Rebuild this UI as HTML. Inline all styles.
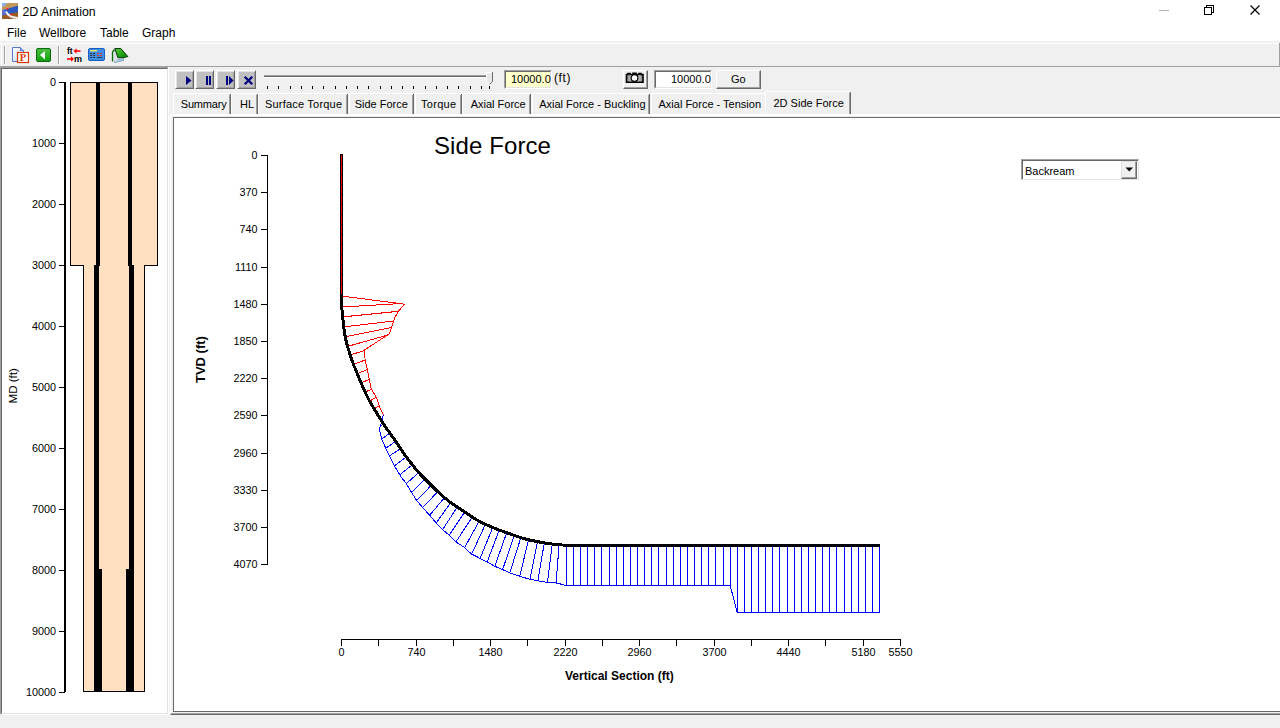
<!DOCTYPE html>
<html><head><meta charset="utf-8">
<style>
*{margin:0;padding:0;box-sizing:border-box}
html,body{width:1280px;height:728px;overflow:hidden;background:#f0f0f0;font-family:"Liberation Sans",sans-serif;color:#000}
.a{position:absolute}
.t{position:absolute;white-space:nowrap;line-height:1}
#title{left:0;top:0;width:1280px;height:41px;background:#fff}
#band{left:0;top:41px;width:1280px;height:2px;background:#f0f0f0}
#band2{left:0;top:43px;width:1280px;height:1px;background:#fff}
.btn{position:absolute;background:#c0c0c0;border-top:1px solid #fff;border-left:1px solid #fff;border-right:1px solid #696969;border-bottom:1px solid #696969;box-shadow:inset 1px 1px 0 #e3e3e3,inset -1px -1px 0 #a0a0a0}
.btn2{position:absolute;background:#f0f0f0;border-top:1px solid #fff;border-left:1px solid #fff;border-right:1px solid #696969;border-bottom:1px solid #696969;box-shadow:inset -1px -1px 0 #a0a0a0}
.edit{position:absolute;border-top:1px solid #a0a0a0;border-left:1px solid #a0a0a0;border-right:1px solid #fff;border-bottom:1px solid #fff}
.edit>div{position:absolute;left:0;top:0;right:0;bottom:0;border-top:1px solid #696969;border-left:1px solid #696969;border-right:1px solid #e3e3e3;border-bottom:1px solid #e3e3e3}
.tab{position:absolute;top:93px;height:22px;font-size:12px}
.sep{position:absolute;width:2px;background:#696969;border-right:1px solid #a0a0a0}
</style></head><body>
<div id="title" class="a"></div>
<div id="band" class="a"></div>
<div id="band2" class="a"></div>
<div class="a" style="left:1px;top:44px;width:1px;height:22px;background:#fff"></div>

<!-- app icon -->
<svg class="a" style="left:2px;top:3px" width="16" height="16" viewBox="0 0 16 16">
<rect width="16" height="16" fill="#2a58c0"/>
<polygon points="0,0 16,0 16,2.5 0,7.5" fill="#c49658"/>
<polygon points="0,0 6,0 0,4.5" fill="#8ab8ec"/>
<polygon points="0,7 3,6.2 4,14 0,14" fill="#5a6cd0"/>
<polygon points="0,16 0,12.5 16,9 16,16" fill="#9a5a24"/>
<path d="M4,8.5 Q6.5,14.5 16,15" stroke="#eeeeee" stroke-width="2" fill="none"/>
<circle cx="5.5" cy="6" r="1" fill="#f02020"/><circle cx="9.5" cy="11.5" r="1" fill="#f02020"/>
</svg>
<div class="t" style="left:22.5px;top:6px;font-size:12.3px">2D Animation</div>

<!-- window controls -->
<div class="a" style="left:1159px;top:10px;width:10px;height:1px;background:#b4b4b4"></div>
<svg class="a" style="left:1204px;top:5px" width="10" height="10" viewBox="0 0 10 10" shape-rendering="crispEdges"><path d="M2.5,2 V0.5 H9.5 V7.5 H8" fill="none" stroke="#000"/><rect x="0.5" y="2.5" width="7" height="7" fill="none" stroke="#000"/></svg>
<svg class="a" style="left:1250px;top:5px" width="10" height="10" viewBox="0 0 10 10"><path d="M0.5,0.5 L9.5,9.5 M9.5,0.5 L0.5,9.5" stroke="#000" stroke-width="1.2"/></svg>
<!-- menu -->
<div class="t" style="left:7px;top:27px;font-size:12px">File</div>
<div class="t" style="left:39px;top:27px;font-size:12px">Wellbore</div>
<div class="t" style="left:100px;top:27px;font-size:12px">Table</div>
<div class="t" style="left:142px;top:27px;font-size:12px">Graph</div>

<!-- toolbar separators -->
<div class="a" style="left:4px;top:46px;width:1px;height:18px;background:#a0a0a0"></div>
<div class="a" style="left:5px;top:46px;width:1px;height:18px;background:#fff"></div>
<div class="a" style="left:58px;top:46px;width:1px;height:18px;background:#a0a0a0"></div>
<div class="a" style="left:59px;top:46px;width:1px;height:18px;background:#fff"></div>

<!-- toolbar icons -->
<svg class="a" style="left:12px;top:46px" width="18" height="18" viewBox="0 0 18 18">
<defs><linearGradient id="pg" x1="0" y1="0" x2="1" y2="1"><stop offset="0" stop-color="#fff"/><stop offset="1" stop-color="#bcd6f5"/></linearGradient></defs>
<path d="M0.5,1.5 H8.5 L11.5,4.5 V15.5 H0.5 Z" fill="url(#pg)" stroke="#5a78c8"/>
<path d="M8.5,1.5 V4.5 H11.5" fill="#9ec0ee" stroke="#5a78c8"/>
<rect x="5.5" y="6.5" width="11" height="10" fill="#fff" stroke="#d83a10" stroke-width="1.2"/>
<text x="11" y="15" font-family="Liberation Serif" font-weight="bold" font-size="10.5" fill="#d83a10" text-anchor="middle">P</text>
</svg>
<svg class="a" style="left:36px;top:48px" width="15" height="14" viewBox="0 0 15 14">
<defs><linearGradient id="gg" x1="0" y1="0" x2="0" y2="1"><stop offset="0" stop-color="#4cc040"/><stop offset="1" stop-color="#10a010"/></linearGradient></defs>
<rect x="0.5" y="0.5" width="14" height="13" rx="1.5" fill="url(#gg)" stroke="#0a6a10"/>
<polygon points="4,7 9,3 9,11.5" fill="#fff"/>
</svg>
<svg class="a" style="left:66px;top:47px" width="17" height="16" viewBox="0 0 17 16">
<text x="1" y="7" font-family="Liberation Sans" font-weight="bold" font-size="8.5" fill="#000">ft</text>
<path d="M9,4 H14.5" stroke="#f00" stroke-width="1.6"/><polygon points="7.5,4 10.5,1.2 10.5,6.8" fill="#f00"/>
<path d="M1,12 H6" stroke="#f00" stroke-width="1.6"/><polygon points="8,12 5,9.2 5,14.8" fill="#f00"/>
<text x="8" y="15" font-family="Liberation Sans" font-weight="bold" font-size="9" fill="#000">m</text>
</svg>
<svg class="a" style="left:88px;top:48px" width="18" height="14" viewBox="0 0 18 14">
<rect x="0.5" y="0.5" width="16" height="12" rx="1.5" fill="#3c8ee6" stroke="#1a5cc0"/>
<rect x="2" y="2" width="7" height="1.5" fill="#e8e070"/>
<g fill="#333"><rect x="2" y="5" width="2" height="1"/><rect x="5" y="5" width="2" height="1"/><rect x="2" y="7" width="2" height="1"/><rect x="5" y="7" width="2" height="1"/><rect x="2" y="9" width="2" height="1"/><rect x="5" y="9" width="2" height="1"/><rect x="9" y="9" width="5" height="1"/></g>
<g fill="#d33"><rect x="9" y="5" width="2" height="1"/><rect x="12" y="5" width="2" height="1"/><rect x="9" y="7" width="2" height="1"/><rect x="12" y="7" width="2" height="1"/></g>
</svg>
<svg class="a" style="left:111px;top:47px" width="18" height="17" viewBox="0 0 18 17">
<defs><linearGradient id="bk" x1="0" y1="0" x2="1" y2="1"><stop offset="0" stop-color="#50d030"/><stop offset="1" stop-color="#008000"/></linearGradient></defs>
<polygon points="3,13.5 12.5,11.5 12.5,13.5 3.5,15.5" fill="#b0d8f8" stroke="#7090b8" stroke-width="0.8"/>
<polygon points="2.5,5 3.8,2.5 7,10.8 6,14 2.5,14.5" fill="#dcdce6"/>
<path d="M1.5,14.5 V5 L3.5,2.5" fill="none" stroke="#0a6a0a" stroke-width="1.3"/>
<polygon points="3.8,1.5 9.8,1.5 16.8,9.5 13.5,10.5 7,10.8" fill="url(#bk)" stroke="#053805" stroke-width="1"/>
</svg>

<div class="a" style="left:1279px;top:43px;width:1px;height:23px;background:#a0a0a0"></div>
<!-- toolbar bottom line -->
<div class="a" style="left:0;top:66px;width:1280px;height:1px;background:#a0a0a0"></div>

<!-- left panel -->
<div class="a" style="left:0;top:67px;width:169px;height:648px;background:#fff;border-top:1px solid #a0a0a0;border-left:1px solid #a0a0a0;border-right:1px solid #fff;border-bottom:1px solid #fff"></div><div class="a" style="left:1px;top:68px;width:167px;height:646px;border-top:1px solid #696969;border-left:1px solid #696969;border-right:1px solid #e3e3e3;border-bottom:1px solid #e3e3e3"></div>

<!-- right panel highlight line -->
<div class="a" style="left:168px;top:67px;width:1px;height:648px;background:#fff"></div>

<!-- animation buttons -->
<div class="btn" style="left:175px;top:70px;width:19px;height:19px"></div>
<div class="btn" style="left:195px;top:70px;width:19px;height:19px"></div>
<div class="btn" style="left:216px;top:70px;width:19px;height:19px"></div>
<div class="btn" style="left:237px;top:70px;width:19px;height:19px"></div>
<svg class="a" style="left:175px;top:70px" width="82" height="19" viewBox="0 0 82 19">
<polygon points="11,6 16.5,10.5 11,15" fill="#000080"/>
<rect x="31" y="6" width="2" height="9" fill="#000080"/><rect x="34" y="6" width="2" height="9" fill="#000080"/>
<rect x="51" y="6" width="2" height="9" fill="#000080"/><polygon points="54,6 58.5,10.5 54,15" fill="#000080"/>
<path d="M70.5,7.5 L76.5,13.5 M76.5,7.5 L70.5,13.5" stroke="#000080" stroke-width="2.2" stroke-linecap="square"/>
</svg>

<!-- slider -->
<div class="a" style="left:264px;top:75px;width:222px;height:1px;background:#a0a0a0"></div>
<div class="a" style="left:264px;top:76px;width:222px;height:1px;background:#696969"></div>
<div class="a" style="left:264px;top:77px;width:222px;height:1px;background:#fff"></div>
<svg class="a" style="left:264px;top:70px" width="232" height="22" viewBox="0 0 232 22" id="ticks"><rect x="3" y="16" width="1" height="3" fill="#000"/><rect x="14" y="16" width="1" height="3" fill="#000"/><rect x="26" y="16" width="1" height="3" fill="#000"/><rect x="37" y="16" width="1" height="3" fill="#000"/><rect x="48" y="16" width="1" height="3" fill="#000"/><rect x="59" y="16" width="1" height="3" fill="#000"/><rect x="71" y="16" width="1" height="3" fill="#000"/><rect x="82" y="16" width="1" height="3" fill="#000"/><rect x="93" y="16" width="1" height="3" fill="#000"/><rect x="104" y="16" width="1" height="3" fill="#000"/><rect x="116" y="16" width="1" height="3" fill="#000"/><rect x="127" y="16" width="1" height="3" fill="#000"/><rect x="138" y="16" width="1" height="3" fill="#000"/><rect x="149" y="16" width="1" height="3" fill="#000"/><rect x="161" y="16" width="1" height="3" fill="#000"/><rect x="172" y="16" width="1" height="3" fill="#000"/><rect x="183" y="16" width="1" height="3" fill="#000"/><rect x="194" y="16" width="1" height="3" fill="#000"/><rect x="206" y="16" width="1" height="3" fill="#000"/><rect x="217" y="16" width="1" height="3" fill="#000"/><rect x="225" y="16" width="1" height="3" fill="#000"/></svg>
<svg class="a" style="left:485px;top:71px" width="10" height="15" viewBox="0 0 10 15">
<path d="M1.5,1.5 H7.5 V10.5 L4.5,13.5 L1.5,10.5 Z" fill="#e8e8e8" stroke="#fff"/>
<path d="M7.5,1 V10.5 L4.5,13.5" fill="none" stroke="#696969"/>
</svg>

<!-- edit 1 -->
<div class="edit" style="left:504px;top:70px;width:48px;height:19px"><div style="background:#ffffcc"></div></div>
<div class="t" style="left:511px;top:74px;font-size:11px">10000.0</div>
<div class="t" style="left:554px;top:71.5px;font-size:12px;letter-spacing:0.6px">(ft)</div>

<!-- camera button -->
<div class="btn2" style="left:623px;top:70px;width:25px;height:19px"></div>
<svg class="a" style="left:625px;top:72px" width="20" height="12" viewBox="0 0 20 12">
<defs><linearGradient id="cg" x1="0" y1="0" x2="1" y2="0"><stop offset="0" stop-color="#888"/><stop offset="0.5" stop-color="#f0f0f0"/><stop offset="1" stop-color="#888"/></linearGradient></defs>
<path d="M1.5,2.5 H3 V1.5 H5 V2.5 H8 V1.2 H11 V2.5 H14 V1.5 H16 V2.5 H18 V10.2 H1.5 Z" fill="url(#cg)" stroke="#000" stroke-width="1.6"/>
<circle cx="9.5" cy="6" r="3.4" fill="#fff" stroke="#000" stroke-width="1.2"/>
</svg>

<!-- edit 2 -->
<div class="edit" style="left:654px;top:70px;width:58px;height:19px"><div style="background:#fff"></div></div>
<div class="t" style="left:671px;top:74px;font-size:11px">10000.0</div>

<!-- go -->
<div class="btn2" style="left:716px;top:70px;width:45px;height:19px"></div>
<div class="t" style="left:731px;top:74px;font-size:11px">Go</div>

<!-- tabs -->
<div class="a" style="left:173px;top:93px;width:57px;height:21px;background:#f0f0f0;border-top:1px solid #fff;border-left:1px solid #fff"></div><div class="a" style="left:230px;top:94px;width:1px;height:20px;background:#696969"></div><div class="a" style="left:229px;top:95px;width:1px;height:19px;background:#a0a0a0"></div><div class="t" style="left:180.8px;top:98.5px;font-size:11px;letter-spacing:-0.2px">Summary</div>
<div class="a" style="left:231px;top:93px;width:26px;height:21px;background:#f0f0f0;border-top:1px solid #fff;border-left:1px solid #fff"></div><div class="a" style="left:257px;top:94px;width:1px;height:20px;background:#696969"></div><div class="a" style="left:256px;top:95px;width:1px;height:19px;background:#a0a0a0"></div><div class="t" style="left:240.1px;top:98.5px;font-size:11px">HL</div>
<div class="a" style="left:258px;top:93px;width:89px;height:21px;background:#f0f0f0;border-top:1px solid #fff;border-left:1px solid #fff"></div><div class="a" style="left:347px;top:94px;width:1px;height:20px;background:#696969"></div><div class="a" style="left:346px;top:95px;width:1px;height:19px;background:#a0a0a0"></div><div class="t" style="left:265.0px;top:98.5px;font-size:11px;letter-spacing:0.2px">Surface Torque</div>
<div class="a" style="left:349px;top:93px;width:64px;height:21px;background:#f0f0f0;border-top:1px solid #fff;border-left:1px solid #fff"></div><div class="a" style="left:413px;top:94px;width:1px;height:20px;background:#696969"></div><div class="a" style="left:412px;top:95px;width:1px;height:19px;background:#a0a0a0"></div><div class="t" style="left:354.7px;top:98.5px;font-size:11px">Side Force</div>
<div class="a" style="left:415px;top:93px;width:46px;height:21px;background:#f0f0f0;border-top:1px solid #fff;border-left:1px solid #fff"></div><div class="a" style="left:461px;top:94px;width:1px;height:20px;background:#696969"></div><div class="a" style="left:460px;top:95px;width:1px;height:19px;background:#a0a0a0"></div><div class="t" style="left:421.0px;top:98.5px;font-size:11px;letter-spacing:0.3px">Torque</div>
<div class="a" style="left:462px;top:93px;width:68px;height:21px;background:#f0f0f0;border-top:1px solid #fff;border-left:1px solid #fff"></div><div class="a" style="left:530px;top:94px;width:1px;height:20px;background:#696969"></div><div class="a" style="left:529px;top:95px;width:1px;height:19px;background:#a0a0a0"></div><div class="t" style="left:470.7px;top:98.5px;font-size:11px">Axial Force</div>
<div class="a" style="left:532px;top:93px;width:117px;height:21px;background:#f0f0f0;border-top:1px solid #fff;border-left:1px solid #fff"></div><div class="a" style="left:649px;top:94px;width:1px;height:20px;background:#696969"></div><div class="a" style="left:648px;top:95px;width:1px;height:19px;background:#a0a0a0"></div><div class="t" style="left:539.2px;top:98.5px;font-size:11px">Axial Force - Buckling</div>
<div class="a" style="left:651px;top:93px;width:116px;height:21px;background:#f0f0f0;border-top:1px solid #fff;border-left:1px solid #fff"></div><div class="t" style="left:658.5px;top:98.5px;font-size:11px">Axial Force - Tension</div>
<div class="a" style="left:765px;top:91px;width:85px;height:24px;background:#f0f0f0;border-top:1px solid #fff;border-left:1px solid #fff"></div><div class="a" style="left:850px;top:92px;width:1px;height:22px;background:#696969"></div><div class="a" style="left:849px;top:93px;width:1px;height:21px;background:#a0a0a0"></div><div class="t" style="left:773.5px;top:97.5px;font-size:11px">2D Side Force</div>
<!-- right panel tab page -->
<div class="a" style="left:170px;top:114px;width:1110px;height:601px;border-top:2px solid #fff;border-left:1px solid #fff;border-bottom:1px solid #696969"></div>
<div class="a" style="left:173px;top:117px;width:1107px;height:595px;background:#fff;border-top:1px solid #696969;border-left:1px solid #696969;border-bottom:1px solid #696969"></div><div class="a" style="left:171px;top:713px;width:1109px;height:1px;background:#a0a0a0"></div>

<!-- dropdown -->
<div class="a" style="left:1021px;top:159px;width:118px;height:21px;background:#fff;border-top:1px solid #a0a0a0;border-left:1px solid #a0a0a0;border-right:1px solid #e3e3e3;border-bottom:1px solid #e3e3e3"></div>
<div class="a" style="left:1022px;top:160px;width:116px;height:19px;border-top:1px solid #696969;border-left:1px solid #696969"></div>
<div class="a" style="left:1121px;top:161px;width:16px;height:18px;background:#f0f0f0;border-top:1px solid #e3e3e3;border-left:1px solid #e3e3e3;border-right:1px solid #696969;border-bottom:1px solid #696969;box-shadow:inset -1px -1px 0 #a0a0a0"></div>
<svg class="a" style="left:1125px;top:167px" width="9" height="5" viewBox="0 0 9 5"><polygon points="0.5,0.5 8,0.5 4.25,4.5" fill="#000"/></svg>
<div class="t" style="left:1025px;top:165.5px;font-size:11px">Backream</div>
<!--CHART-->
<svg class="a" style="left:0;top:0" width="1280" height="728" viewBox="0 0 1280 728">
<rect x="64" y="82" width="2" height="610" fill="#000"/>
<rect x="59" y="82" width="6" height="1" fill="#000"/>
<text x="56" y="85.8" font-family="Liberation Sans" font-size="10.8" text-anchor="end">0</text>
<rect x="59" y="143" width="6" height="1" fill="#000"/>
<text x="56" y="146.8" font-family="Liberation Sans" font-size="10.8" text-anchor="end">1000</text>
<rect x="59" y="204" width="6" height="1" fill="#000"/>
<text x="56" y="207.8" font-family="Liberation Sans" font-size="10.8" text-anchor="end">2000</text>
<rect x="59" y="265" width="6" height="1" fill="#000"/>
<text x="56" y="268.8" font-family="Liberation Sans" font-size="10.8" text-anchor="end">3000</text>
<rect x="59" y="326" width="6" height="1" fill="#000"/>
<text x="56" y="329.8" font-family="Liberation Sans" font-size="10.8" text-anchor="end">4000</text>
<rect x="59" y="387" width="6" height="1" fill="#000"/>
<text x="56" y="390.8" font-family="Liberation Sans" font-size="10.8" text-anchor="end">5000</text>
<rect x="59" y="448" width="6" height="1" fill="#000"/>
<text x="56" y="451.8" font-family="Liberation Sans" font-size="10.8" text-anchor="end">6000</text>
<rect x="59" y="509" width="6" height="1" fill="#000"/>
<text x="56" y="512.8" font-family="Liberation Sans" font-size="10.8" text-anchor="end">7000</text>
<rect x="59" y="570" width="6" height="1" fill="#000"/>
<text x="56" y="573.8" font-family="Liberation Sans" font-size="10.8" text-anchor="end">8000</text>
<rect x="59" y="631" width="6" height="1" fill="#000"/>
<text x="56" y="634.8" font-family="Liberation Sans" font-size="10.8" text-anchor="end">9000</text>
<rect x="59" y="692" width="6" height="1" fill="#000"/>
<text x="56" y="695.8" font-family="Liberation Sans" font-size="10.8" text-anchor="end">10000</text>
<text transform="translate(16.5,403.5) rotate(-90)" font-family="Liberation Sans" font-size="11.6">MD (ft)</text>
<polygon points="70.5,82.5 157.5,82.5 157.5,265.5 144.5,265.5 144.5,691.5 83.5,691.5 83.5,265.5 70.5,265.5" fill="#ffe0c0" stroke="#000" stroke-width="1" shape-rendering="crispEdges"/>
<g fill="#000">
<rect x="96" y="82" width="4" height="184"/><rect x="128" y="82" width="4" height="184"/>
<rect x="94" y="265" width="5" height="305"/><rect x="129" y="265" width="5" height="305"/>
<rect x="94" y="569" width="8" height="123"/><rect x="126" y="569" width="8" height="123"/>
</g>
<text x="434" y="154" font-family="Liberation Sans" font-size="24" letter-spacing="0.1">Side Force</text>
<rect x="267" y="155" width="1" height="410" fill="#000"/>
<rect x="261" y="155" width="6" height="1" fill="#000"/>
<text x="257.5" y="158.7" font-family="Liberation Sans" font-size="10.8" text-anchor="end">0</text>
<rect x="261" y="192" width="6" height="1" fill="#000"/>
<text x="257.5" y="195.7" font-family="Liberation Sans" font-size="10.8" text-anchor="end">370</text>
<rect x="261" y="229" width="6" height="1" fill="#000"/>
<text x="257.5" y="232.7" font-family="Liberation Sans" font-size="10.8" text-anchor="end">740</text>
<rect x="261" y="267" width="6" height="1" fill="#000"/>
<text x="257.5" y="270.7" font-family="Liberation Sans" font-size="10.8" text-anchor="end">1110</text>
<rect x="261" y="304" width="6" height="1" fill="#000"/>
<text x="257.5" y="307.7" font-family="Liberation Sans" font-size="10.8" text-anchor="end">1480</text>
<rect x="261" y="341" width="6" height="1" fill="#000"/>
<text x="257.5" y="344.7" font-family="Liberation Sans" font-size="10.8" text-anchor="end">1850</text>
<rect x="261" y="378" width="6" height="1" fill="#000"/>
<text x="257.5" y="381.7" font-family="Liberation Sans" font-size="10.8" text-anchor="end">2220</text>
<rect x="261" y="415" width="6" height="1" fill="#000"/>
<text x="257.5" y="418.7" font-family="Liberation Sans" font-size="10.8" text-anchor="end">2590</text>
<rect x="261" y="453" width="6" height="1" fill="#000"/>
<text x="257.5" y="456.7" font-family="Liberation Sans" font-size="10.8" text-anchor="end">2960</text>
<rect x="261" y="490" width="6" height="1" fill="#000"/>
<text x="257.5" y="493.7" font-family="Liberation Sans" font-size="10.8" text-anchor="end">3330</text>
<rect x="261" y="527" width="6" height="1" fill="#000"/>
<text x="257.5" y="530.7" font-family="Liberation Sans" font-size="10.8" text-anchor="end">3700</text>
<rect x="261" y="564" width="6" height="1" fill="#000"/>
<text x="257.5" y="567.7" font-family="Liberation Sans" font-size="10.8" text-anchor="end">4070</text>
<text transform="translate(204.8,383) rotate(-90)" font-family="Liberation Sans" font-size="13" font-weight="bold">TVD (ft)</text>
<rect x="341" y="639" width="560" height="1" fill="#000"/>
<rect x="341" y="639" width="1" height="7" fill="#000"/>
<text x="341.5" y="656" font-family="Liberation Sans" font-size="10.8" text-anchor="middle">0</text>
<rect x="378" y="639" width="1" height="7" fill="#000"/>
<rect x="416" y="639" width="1" height="7" fill="#000"/>
<text x="416.5" y="656" font-family="Liberation Sans" font-size="10.8" text-anchor="middle">740</text>
<rect x="453" y="639" width="1" height="7" fill="#000"/>
<rect x="490" y="639" width="1" height="7" fill="#000"/>
<text x="490.5" y="656" font-family="Liberation Sans" font-size="10.8" text-anchor="middle">1480</text>
<rect x="527" y="639" width="1" height="7" fill="#000"/>
<rect x="565" y="639" width="1" height="7" fill="#000"/>
<text x="565.5" y="656" font-family="Liberation Sans" font-size="10.8" text-anchor="middle">2220</text>
<rect x="602" y="639" width="1" height="7" fill="#000"/>
<rect x="639" y="639" width="1" height="7" fill="#000"/>
<text x="639.5" y="656" font-family="Liberation Sans" font-size="10.8" text-anchor="middle">2960</text>
<rect x="676" y="639" width="1" height="7" fill="#000"/>
<rect x="714" y="639" width="1" height="7" fill="#000"/>
<text x="714.5" y="656" font-family="Liberation Sans" font-size="10.8" text-anchor="middle">3700</text>
<rect x="751" y="639" width="1" height="7" fill="#000"/>
<rect x="788" y="639" width="1" height="7" fill="#000"/>
<text x="788.5" y="656" font-family="Liberation Sans" font-size="10.8" text-anchor="middle">4440</text>
<rect x="825" y="639" width="1" height="7" fill="#000"/>
<rect x="863" y="639" width="1" height="7" fill="#000"/>
<text x="863.5" y="656" font-family="Liberation Sans" font-size="10.8" text-anchor="middle">5180</text>
<rect x="900" y="639" width="1" height="7" fill="#000"/>
<text x="900.5" y="656" font-family="Liberation Sans" font-size="10.8" text-anchor="middle">5550</text>
<text x="565" y="680" font-family="Liberation Sans" font-size="12" font-weight="bold">Vertical Section (ft)</text>
<g shape-rendering="crispEdges" fill="none" stroke-width="1">
<path stroke="#f00" d="M341.8,307.0L400.3,303.6 M342.6,316.9L398.5,311.3 M343.7,326.9L393.6,321.0 M345.2,336.7L391.4,327.5 M347.6,346.4L387.2,335.2 M350.2,355.0L364.1,350.6 M353.5,364.5L365.2,360.0 M357.2,373.7L367.3,369.6 M361.1,383.0L369.2,379.4 M365.2,392.1L371.5,389.2 M369.6,401.0L376.4,397.4 M374.1,408.8L379.2,405.8"/>
<polyline stroke="#f00" points="341.5,296.0 404.9,304.2 398.9,310.5 394.8,317.6 392.1,325.3 389.3,333.8 364.1,350.3 365.2,360.2 367.3,369.5 369.2,379.3 371.2,388.7 376.6,397.7 379.4,406.5 383.3,414.9"/>
<path stroke="#00f" d="M383.6,424.1L380.2,426.3 M389.8,433.2L381.8,439.0 M395.7,441.2L385.8,448.3 M400.7,448.7L389.5,455.8 M406.3,456.9L394.5,465.7 M412.4,464.8L399.7,474.8 M418.8,472.5L406.2,483.7 M424.9,479.0L411.5,492.3 M431.3,485.4L416.6,500.2 M437.7,491.7L422.7,507.6 M444.4,497.7L429.7,515.2 M450.7,502.6L436.2,522.9 M457.3,507.0L442.6,529.6 M464.8,512.0L449.2,535.2 M472.3,517.0L455.9,541.9 M479.1,521.2L464.6,547.7 M485.4,524.3L471.7,554.0 M492.7,527.5L480.1,558.4 M499.2,530.0L487.1,562.1 M506.7,532.8L494.8,566.2 M514.3,535.4L502.6,569.6 M520.9,537.6L509.8,572.8 M528.6,539.7L519.7,576.2 M537.4,541.6L530.0,579.4 M544.3,542.9L537.9,580.7 M552.2,544.0L547.5,582.4 M559.1,544.7L556.1,583.0 M879.6,545.5L879.6,612.4 M872.5,545.5L872.5,612.4 M865.4,545.5L865.4,612.4 M858.2,545.5L858.2,612.4 M851.1,545.5L851.1,612.4 M844.0,545.5L844.0,612.4 M836.9,545.5L836.9,612.4 M829.8,545.5L829.8,612.4 M822.6,545.5L822.6,612.4 M815.5,545.5L815.5,612.4 M808.4,545.5L808.4,612.4 M801.3,545.5L801.3,612.4 M794.2,545.5L794.2,612.4 M787.0,545.5L787.0,612.4 M779.9,545.5L779.9,612.4 M772.8,545.5L772.8,612.4 M765.7,545.5L765.7,612.4 M758.6,545.5L758.6,612.4 M751.4,545.5L751.4,612.4 M744.3,545.5L744.3,612.4 M737.2,545.5L737.2,612.4 M730.1,545.5L730.1,585.4 M723.0,545.5L723.0,585.4 M715.8,545.5L715.8,585.4 M708.7,545.5L708.7,585.4 M701.6,545.5L701.6,585.4 M694.5,545.5L694.5,585.4 M687.4,545.5L687.4,585.4 M680.2,545.5L680.2,585.4 M673.1,545.5L673.1,585.4 M666.0,545.5L666.0,585.4 M658.9,545.5L658.9,585.4 M651.8,545.5L651.8,585.4 M644.6,545.5L644.6,585.4 M637.5,545.5L637.5,585.4 M630.4,545.5L630.4,585.4 M623.3,545.5L623.3,585.4 M616.2,545.5L616.2,585.4 M609.0,545.5L609.0,585.4 M601.9,545.5L601.9,585.4 M594.8,545.5L594.8,585.4 M587.7,545.5L587.7,585.4 M580.6,545.5L580.6,585.4 M573.4,545.5L573.4,585.4 M566.3,545.5L566.3,585.4"/>
<polyline stroke="#00f" points="383.3,414.9 381.5,422.0 379.3,429.1 381.6,438.7 385.9,448.5 390.2,457.2 395.2,467.1 400.3,475.8 405.9,483.1 411.2,491.8 416.2,499.8 422.4,507.3 429.3,514.8 435.4,522.0 442.0,529.1 449.2,535.2 456.3,542.3 463.5,546.7 471.2,553.8 478.8,557.7 487.1,562.1 495.3,566.5 504.1,570.3 512.1,573.8 529.7,579.3 548.4,582.6 557.7,583.1 564.8,585.4 730.2,585.4 737.1,612.4 879.6,612.4 879.6,545.5"/>
</g>
<polyline fill="none" stroke="#000" stroke-width="3" shape-rendering="crispEdges" stroke-linejoin="round" points="341.5,154.0 341.5,158.0 341.5,162.0 341.5,166.0 341.5,170.0 341.5,174.0 341.5,178.0 341.5,182.0 341.5,186.0 341.5,190.0 341.5,194.0 341.5,198.0 341.5,202.0 341.5,206.0 341.5,210.0 341.5,214.0 341.5,218.0 341.5,222.0 341.5,226.0 341.5,230.0 341.5,234.0 341.5,238.0 341.5,242.0 341.5,246.0 341.5,250.0 341.5,254.0 341.5,258.0 341.5,262.0 341.5,266.0 341.5,270.0 341.5,274.0 341.5,278.0 341.5,282.0 341.5,286.0 341.5,290.0 341.5,294.0 341.5,298.0 341.6,302.0 341.7,306.0 342.0,310.0 342.3,314.0 342.7,317.9 343.2,321.9 343.6,325.9 344.1,329.9 344.7,333.8 345.4,337.7 346.3,341.6 347.3,345.5 348.4,349.3 349.6,353.1 350.8,356.9 352.1,360.7 353.5,364.5 355.0,368.2 356.5,371.9 358.0,375.6 359.5,379.3 361.1,383.0 362.7,386.6 364.3,390.3 366.0,393.9 367.8,397.5 369.6,401.0 371.6,404.5 373.6,408.0 375.7,411.4 377.8,414.8 379.9,418.2 382.0,421.6 384.2,424.9 386.4,428.3 388.7,431.5 391.0,434.8 393.4,438.0 395.7,441.2 398.0,444.5 400.2,447.9 402.3,451.2 404.5,454.5 406.9,457.7 409.3,460.9 411.8,464.0 414.3,467.2 416.8,470.2 419.4,473.2 422.2,476.2 424.9,479.0 427.8,481.9 430.6,484.7 433.4,487.5 436.3,490.3 439.2,493.0 442.2,495.7 445.2,498.3 448.3,500.8 451.5,503.1 454.8,505.4 458.2,507.6 461.5,509.8 464.8,512.0 468.2,514.3 471.5,516.5 474.8,518.7 478.2,520.7 481.8,522.6 485.4,524.3 489.0,525.9 492.7,527.5 496.4,528.9 500.1,530.4 503.9,531.7 507.7,533.1 511.4,534.4 515.2,535.7 519.0,537.0 522.8,538.2 526.7,539.3 530.5,540.2 534.5,541.0 538.4,541.8 542.3,542.5 546.2,543.2 550.2,543.8 554.2,544.3 558.1,544.7 562.1,545.0 566.1,545.1 570.1,545.2 574.1,545.3 578.1,545.3 582.1,545.4 586.1,545.4 590.1,545.5 594.1,545.5 598.1,545.5 602.1,545.5 606.1,545.5 610.1,545.5 614.1,545.5 618.1,545.5 622.1,545.5 626.1,545.5 630.1,545.5 634.1,545.5 638.1,545.5 642.1,545.5 646.1,545.5 650.1,545.5 654.1,545.5 658.1,545.5 662.1,545.5 666.1,545.5 670.1,545.5 674.1,545.5 678.1,545.5 682.1,545.5 686.1,545.5 690.1,545.5 694.1,545.5 698.1,545.5 702.1,545.5 706.1,545.5 710.1,545.5 714.1,545.5 718.1,545.5 722.1,545.5 726.1,545.5 730.1,545.5 734.1,545.5 738.1,545.5 742.1,545.5 746.1,545.5 750.1,545.5 754.1,545.5 758.1,545.5 762.1,545.5 766.1,545.5 770.1,545.5 774.1,545.5 778.1,545.5 782.1,545.5 786.1,545.5 790.1,545.5 794.1,545.5 798.1,545.5 802.1,545.5 806.1,545.5 810.1,545.5 814.1,545.5 818.1,545.5 822.1,545.5 826.1,545.5 830.1,545.5 834.1,545.5 838.1,545.5 842.1,545.5 846.1,545.5 850.1,545.5 854.1,545.5 858.1,545.5 862.1,545.5 866.1,545.5 870.1,545.5 874.1,545.5 878.1,545.5 880.1,545.5"/>
<line x1="341.5" y1="155" x2="341.5" y2="295" stroke="#f00" stroke-width="1" shape-rendering="crispEdges"/>
<g fill="#000"><rect x="341" y="154" width="1" height="1"/><rect x="341" y="164" width="1" height="1"/><rect x="341" y="174" width="1" height="1"/><rect x="341" y="184" width="1" height="1"/><rect x="341" y="194" width="1" height="1"/><rect x="341" y="204" width="1" height="1"/><rect x="341" y="214" width="1" height="1"/><rect x="341" y="224" width="1" height="1"/><rect x="341" y="234" width="1" height="1"/><rect x="341" y="244" width="1" height="1"/><rect x="341" y="254" width="1" height="1"/><rect x="341" y="264" width="1" height="1"/><rect x="341" y="274" width="1" height="1"/><rect x="341" y="284" width="1" height="1"/><rect x="341" y="294" width="1" height="1"/></g>
</svg>
<!--/CHART-->
</body></html>
